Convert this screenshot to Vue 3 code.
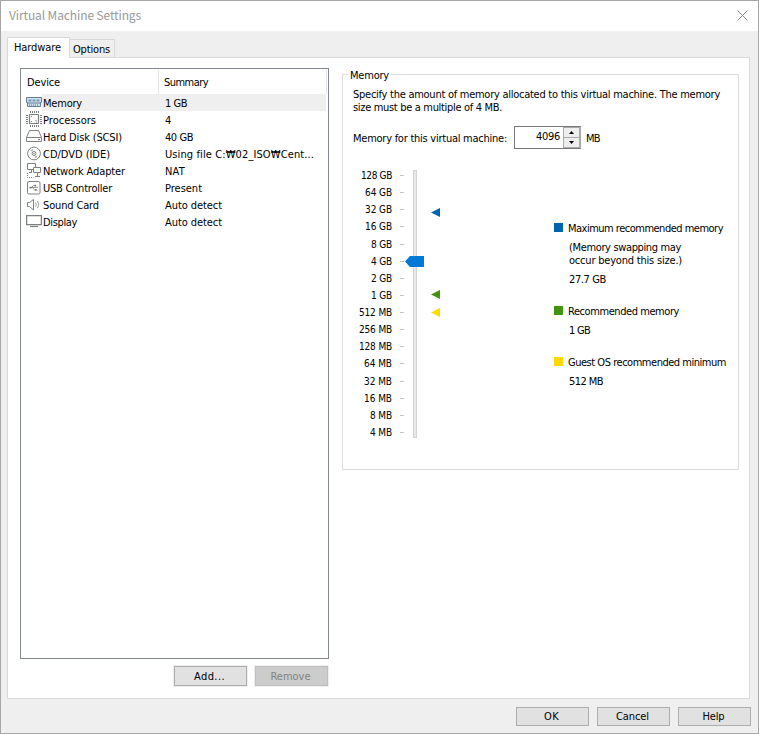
<script setup>
const devices = [
  { icon: 'memory', name: 'Memory', summary: '1 GB', w: 39, sw: 22 },
  { icon: 'cpu', name: 'Processors', summary: '4', w: 53, sw: 6 },
  { icon: 'disk', name: 'Hard Disk (SCSI)', summary: '40 GB', w: 79, sw: 28 },
  { icon: 'cd', name: 'CD/DVD (IDE)', summary: 'Using file C:₩02_ISO₩Cent...', w: 67, sw: 149 },
  { icon: 'network', name: 'Network Adapter', summary: 'NAT', w: 82, sw: 20 },
  { icon: 'usb', name: 'USB Controller', summary: 'Present', w: 69, sw: 37 },
  { icon: 'sound', name: 'Sound Card', summary: 'Auto detect', w: 56, sw: 57 },
  { icon: 'display', name: 'Display', summary: 'Auto detect', w: 34, sw: 57 },
]
const sizes = ['128 GB', '64 GB', '32 GB', '16 GB', '8 GB', '4 GB', '2 GB', '1 GB', '512 MB', '256 MB', '128 MB', '64 MB', '32 MB', '16 MB', '8 MB', '4 MB']
const sizeWidths = [31, 27, 27, 27, 21, 21, 21, 21, 33, 33, 33, 28, 28, 28, 22, 22]

// Tightens or widens the tracking so a label occupies its intended width.
const vFit = {
  mounted(el, { value }) {
    const natural = el.getBoundingClientRect().width
    el.style.letterSpacing = `${(value - natural) / el.textContent.length}px`
  },
}
</script>

<template>
  <div class="dialog">
    <header class="titlebar">
      <span v-fit="132" class="title">Virtual Machine Settings</span>
      <svg class="close" width="11" height="11" viewBox="0 0 11 11"><path d="M.5.5l10 10M10.5.5l-10 10" /></svg>
    </header>

    <nav class="tabs">
      <div class="tab active"><span v-fit="47">Hardware</span></div>
      <div class="tab"><span v-fit="37">Options</span></div>
    </nav>

    <main class="panel">
      <section class="left">
        <div class="list">
          <div class="head">
            <div class="h-device"><span v-fit="33">Device</span></div>
            <div class="h-summary"><span v-fit="44">Summary</span></div>
          </div>
          <div v-for="(d, i) in devices" :key="d.icon" class="row" :class="{ selected: i === 0 }">
            <svg class="icon" width="16" height="17" viewBox="0 0 16 17">
              <g v-if="d.icon === 'memory'" class="blue">
                <path d="M.5 3.500h15v5h-1v4h-13v-4h-1z" />
                <path class="soft" d="M2.500 5.500h3v2h-3zM6.500 5.500h3v2h-3zM10.500 5.500h3v2h-3z" />
                <path d="M1 9h14" /><path d="M3.500 10v2M5.500 10v2M7.500 10v2M9.500 10v2M11.500 10v2" stroke-width=".6" />
              </g>
              <g v-else-if="d.icon === 'cpu'">
                <rect x="3.500" y="3.500" width="9" height="9" rx=".6" stroke-width="1.200" />
                <path d="M4.500 0v2M6.500 0v2M8.500 0v2M10.500 0v2M12.500 0v2M4.500 14v2M6.500 14v2M8.500 14v2M10.500 14v2M12.500 14v2M0 4.500h2M0 6.500h2M0 8.500h2M0 10.500h2M0 12.500h2M14 4.500h2M14 6.500h2M14 8.500h2M14 10.500h2M14 12.500h2" />
                <path d="M5 5.500h1M9.500 9.500h1M5 10.500h1M10 11h1" />
              </g>
              <g v-else-if="d.icon === 'disk'">
                <path d="M3.500 2.500h9l3 7v4H.5v-4zM.5 9.500h15M12 11.500h2" />
              </g>
              <g v-else-if="d.icon === 'cd'">
                <circle cx="8" cy="8.500" r="6.400" /><circle cx="8" cy="8.500" r="2" /><circle cx="8" cy="8.500" r=".3" />
                <path class="soft" d="M4.500 5.500q1-1.500 2.500-1.500l.3 1.500-1.500 1zM11.500 11.500q-1 1.500-2.500 1.500l-.3-1.500 1.500-1z" />
              </g>
              <g v-else-if="d.icon === 'network'">
                <path d="M1.500 1.500h8v6h-8zM5.500 8v2M3 10.500h3" />
                <path class="paper" d="M7.500 5.500h7v5h-7z" /><path d="M11.500 11v3M9 14.500h5" />
                <path d="M1.500 11v4.500h6" stroke-dasharray="1 1" />
              </g>
              <g v-else-if="d.icon === 'usb'">
                <rect x="1.500" y="2.500" width="12.500" height="12.500" rx="1.500" />
                <path d="M4 8.500h8M5.500 8.500l2-2h1M6.500 8.500l2 2.500h1" stroke-width=".8" /><path class="solid" d="M3.500 7.700h2v1.700h-2zM8.500 5.700h1.700v1.700H8.500zM9 10h1.700v1.700H9z" />
              </g>
              <g v-else-if="d.icon === 'sound'">
                <path d="M1.500 6.500h2l4-3v10.500l-4-3.500h-2z" /><path d="M9.500 6.500q1.500 2 0 4M11.500 5q2.500 3.500 0 7" stroke-width=".8" />
              </g>
              <g v-else>
                <path d="M.6 2.600h14.800v9H.6z" stroke-width="1.300" /><path d="M4 13.500h8" stroke-width="1.200" />
              </g>
            </svg>
            <div class="cells">
              <div class="c-name"><span v-fit="d.w">{{ d.name }}</span></div>
              <div class="c-summary"><span v-fit="d.sw">{{ d.summary }}</span></div>
            </div>
          </div>
        </div>
        <div class="list-actions">
          <button class="btn ringed"><span v-fit="31">Add...</span></button>
          <button class="btn ringed disabled"><span v-fit="40">Remove</span></button>
        </div>
      </section>

      <fieldset class="group">
        <legend><span v-fit="39">Memory</span></legend>
        <p class="desc">
          <span v-fit="367">Specify the amount of memory allocated to this virtual machine. The memory</span><br>
          <span v-fit="149">size must be a multiple of 4 MB.</span>
        </p>
        <div class="amount">
          <span v-fit="154" class="label">Memory for this virtual machine:</span>
          <div class="spinner">
            <div class="value"><span v-fit="24">4096</span></div>
            <div class="steps">
              <div class="step"><svg width="5" height="3" viewBox="0 0 5 3"><path d="M0 3L2.500 0L5 3z" /></svg></div>
              <div class="step"><svg width="5" height="3" viewBox="0 0 5 3"><path d="M0 0L2.500 3L5 0z" /></svg></div>
            </div>
          </div>
          <span v-fit="14" class="label">MB</span>
        </div>
        <div class="body">
          <div class="scale">
            <div v-for="(s, i) in sizes" :key="s" class="mark"><span v-fit="sizeWidths[i]">{{ s }}</span><i /></div>
          </div>
          <div class="track">
            <svg class="thumb" width="19" height="11" viewBox="0 0 19 11"><path d="M0 5.500L5 0H19V11H5z" /></svg>
            <svg class="arrow max" width="9" height="9" viewBox="0 0 9 9"><path d="M0 4.500L9 0V9z" /></svg>
            <svg class="arrow rec" width="9" height="9" viewBox="0 0 9 9"><path d="M0 4.500L9 0V9z" /></svg>
            <svg class="arrow min" width="9" height="9" viewBox="0 0 9 9"><path d="M0 4.500L9 0V9z" /></svg>
          </div>
          <div class="legend">
            <div class="entry">
              <b class="max" />
              <div>
                <div><span v-fit="155">Maximum recommended memory</span></div>
                <div class="note"><span v-fit="112">(Memory swapping may</span><br><span v-fit="113">occur beyond this size.)</span></div>
                <div class="amt"><span v-fit="37">27.7 GB</span></div>
              </div>
            </div>
            <div class="entry">
              <b class="rec" />
              <div><div><span v-fit="111">Recommended memory</span></div><div class="amt"><span v-fit="21">1 GB</span></div></div>
            </div>
            <div class="entry">
              <b class="min" />
              <div><div><span v-fit="158">Guest OS recommended minimum</span></div><div class="amt"><span v-fit="34">512 MB</span></div></div>
            </div>
          </div>
        </div>
      </fieldset>
    </main>

    <footer class="actions">
      <button class="btn"><span v-fit="15">OK</span></button>
      <button class="btn"><span v-fit="33">Cancel</span></button>
      <button class="btn"><span v-fit="22">Help</span></button>
    </footer>
  </div>
</template>

<style>
body { background: #efefef; }
</style>

<style scoped>
* { box-sizing: border-box; }
.dialog {
  width: 759px;
  height: 734px;
  border: 1px solid #a7a7a7;
  background: #efefef;
  display: flex;
  flex-direction: column;
  font: 11px/13px "DejaVu Sans Condensed", "DejaVu Sans", "Noto Sans CJK KR", sans-serif;
  font-stretch: condensed;
  color: #000;
  overflow: hidden;
}
span { white-space: nowrap; display: inline-block; }
.titlebar {
  height: 30px;
  flex: none;
  background: #fff;
  display: flex;
  justify-content: space-between;
  padding: 7px 10px 0 8px;
}
.title { font: 12px/14px "Noto Sans CJK KR", "Noto Sans", sans-serif; color: #999; }
.close { margin-top: 2px; fill: none; stroke: #888; }
.tabs { display: flex; align-items: flex-end; height: 26px; flex: none; padding-left: 6px; position: relative; z-index: 1; }
.tab { height: 18px; width: 45px; border: 1px solid #d9d9d9; border-bottom: 0; border-left: 0; padding: 3px 0 0 3px; }
.tab.active { width: 63px; height: 21px; border-left: 1px solid #d9d9d9; background: #fff; margin-bottom: -1px; padding: 3px 0 0 6px; }
.panel {
  flex: none;
  height: 642px;
  width: 743px;
  margin-left: 6px;
  border: 1px solid #d9d9d9;
  background: #fff;
  display: flex;
  align-items: flex-start;
  padding: 10px 10px 0 12px;
}
.left { width: 309px; }
.list { height: 591px; border: 1px solid #828790; padding: 1px; }
.head { height: 24px; display: flex; line-height: 26px; }
.h-device { width: 137px; border-right: 1px solid #e5e5e5; padding-left: 5px; }
.h-summary { flex: 1; border-right: 1px solid #e5e5e5; padding-left: 5px; }
.row { height: 17px; display: flex; padding-left: 4px; line-height: 19px; }
.cells { display: flex; flex: 1; padding-left: 1px; margin-right: 1px; }
.selected .cells { background: #efefef; }
.c-name { width: 122px; }
.c-summary { flex: 1; white-space: nowrap; }
.icon { flex: none; fill: none; stroke: #808080; }
.blue { stroke: #607d98; fill: #d5e2ed; }
.blue .soft { fill: #6f98bc; stroke: none; }
.soft { fill: #bbb; stroke: none; }
.paper { fill: #fff; }
.solid { fill: #777; stroke: none; }
.list-actions { display: flex; justify-content: flex-end; gap: 8px; padding: 7px 1px 0 0; }
.btn {
  width: 73px;
  height: 19px;
  margin: 0;
  padding: 0 2px 0 0;
  border: 1px solid #adadad;
  background: #e1e1e1;
  font: inherit;
  color: #000;
  display: flex;
  align-items: center;
  justify-content: center;
}
.ringed { height: 20px; outline: 1px solid #efefef; }
.disabled { background: #ccc; border-color: #bfbfbf; color: #838383; }
.group {
  margin: 0 0 0 13px;
  padding: 0 0 0 10px;
  width: 397px;
  height: 402px;
  border: 1px solid #dcdcdc;
  min-width: 0;
}
legend { margin-left: -5px; padding: 0 2px; height: 13px; }
legend span { padding-top: 1px; vertical-align: top; }
.desc { margin: 7px 0 0; height: 26px; }
.desc span { vertical-align: top; }
.amount { display: flex; align-items: center; height: 23px; margin-top: 12px; }
.label { padding-top: 2px; }
.spinner { margin: 0 5px 0 7px; width: 67px; height: 23px; display: flex; border: 1px solid #777; border-right-color: #aaa; }
.value { width: 48px; padding: 3px 3px 0 0; text-align: right; }
.steps { flex: 1; border: 1px solid #aaa; display: flex; flex-direction: column; }
.step { flex: 1; display: flex; align-items: center; justify-content: center; background: #eee; }
.step + .step { border-top: 1px solid #aaa; }
.body { display: flex; margin-top: 18px; }
.scale { width: 51px; }
.mark { height: 17.130px; display: flex; align-items: center; justify-content: flex-end; font-size: 10px; }
.mark span { margin-right: 8px; }
.mark i { width: 4px; height: 1px; background: #c4c4c4; }
.track { width: 4px; height: 268px; margin: 3px 0 0 9px; border: 1px solid #d2d5d5; background: #e7eaea; position: relative; }
.thumb { position: absolute; left: -9px; top: 85px; fill: #0078d7; }
.arrow { position: absolute; left: 17px; }
.arrow.max { top: 37px; fill: #0064ad; }
.arrow.rec { top: 119px; fill: #42930e; }
.arrow.min { top: 137px; fill: #ffda00; }
.legend { margin: 55px 0 0 137px; }
.entry { display: flex; gap: 5px; margin-bottom: 19px; }
.entry b { width: 9px; height: 9px; margin-top: 1px; flex: none; }
.entry span { vertical-align: top; }
b.max { background: #0064ad; }
b.rec { background: #42930e; }
b.min { background: #ffda00; }
.note, .amt { margin-top: 6px; padding-left: 1px; }
.actions { display: flex; justify-content: flex-end; gap: 8px; padding: 8px 7px 0 0; }
</style>
